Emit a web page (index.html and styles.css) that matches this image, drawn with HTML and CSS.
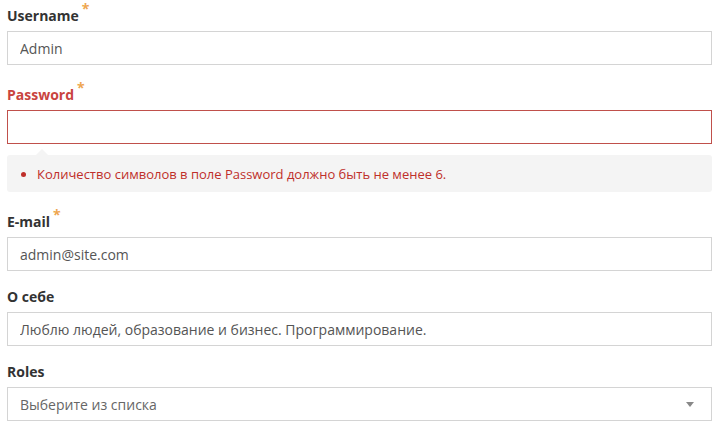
FILE: index.html
```html
<!DOCTYPE html>
<html lang="ru">
<head>
<meta charset="utf-8">
<title>Form</title>
<link rel="stylesheet" href="styles.css">
</head>
<body>
<form class="form">
  <div class="group group-wide">
    <label class="label">Username<span class="req">*</span></label>
    <input class="field" type="text" value="Admin">
  </div>
  <div class="group group-error">
    <label class="label label-error">Password<span class="req">*</span></label>
    <input class="field field-error" type="password" value="">
    <div class="hint">
      <ul class="hint-list">
        <li>Количество символов в поле Password должно быть не менее 6.</li>
      </ul>
    </div>
  </div>
  <div class="group">
    <label class="label">E-mail<span class="req">*</span></label>
    <input class="field" type="text" value="admin@site.com">
  </div>
  <div class="group">
    <label class="label">О себе</label>
    <input class="field" type="text" value="Люблю людей, образование и бизнес. Программирование.">
  </div>
  <div class="group">
    <label class="label">Roles</label>
    <div class="select">
      <span class="select-text">Выберите из списка</span>
      <span class="select-arrow"></span>
    </div>
  </div>
</form>
</body>
</html>
```
FILE: styles.css
```css
* { box-sizing: border-box; }
html, body {
  margin: 0;
  padding: 0;
  background: #fff;
}
body {
  font-family: "Open Sans", "Liberation Sans", sans-serif;
  font-size: 14px;
  color: #333;
}
.form {
  width: 721px;
  padding: 6px 9px 0 7px;
  display: flex;
  flex-direction: column;
}
.group {
  display: flex;
  flex-direction: column;
  margin-bottom: 16px;
}
.group-wide { margin-bottom: 20px; }
.group-error { margin-bottom: 20px; }
.label {
  font-weight: 700;
  font-size: 14px;
  line-height: 20px;
  margin-bottom: 5px;
  color: #333;
}
.label-error { color: #c9443f; }
.req {
  color: #eea650;
  font-size: 14px;
  position: relative;
  top: -7px;
  margin-left: 3px;
  font-weight: 700;
}
.field {
  display: block;
  width: 100%;
  height: 34px;
  margin: 0;
  padding: 0 12px;
  border: 1px solid #d4d4d4;
  border-radius: 0;
  font-family: "Open Sans", "Liberation Sans", sans-serif;
  font-size: 14px;
  color: #555;
  background: #fff;
  outline: none;
}
.field-error { border-color: #c0504b; }
.hint {
  position: relative;
  margin-top: 11px;
  height: 37px;
  background: #f4f4f4;
  border-radius: 3px;
  display: flex;
  align-items: center;
}
.hint::before {
  content: "";
  position: absolute;
  left: 29px;
  top: -6px;
  border-left: 6px solid transparent;
  border-right: 6px solid transparent;
  border-bottom: 6px solid #f4f4f4;
}
.hint-list {
  margin: 0;
  padding: 0 0 0 30px;
  color: #bf2f2a;
  font-size: 13px;
  line-height: 20px;
}
.select {
  height: 34px;
  border: 1px solid #d4d4d4;
  display: flex;
  align-items: center;
  justify-content: space-between;
  padding: 0 17px 0 12px;
}
.select-text { color: #666; }
.select-arrow {
  width: 0;
  height: 0;
  border-left: 4px solid transparent;
  border-right: 4px solid transparent;
  border-top: 5px solid #888;
}
```
